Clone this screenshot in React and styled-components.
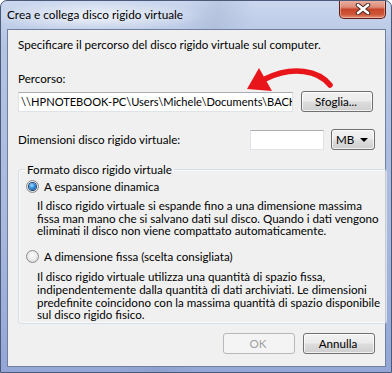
import React from 'react';
import styled, { createGlobalStyle } from 'styled-components';

const GlobalStyle = createGlobalStyle`
  html, body {
    margin: 0;
    padding: 0;
    background: #ffffff;
  }
  body {
    width: 392px;
    height: 373px;
    overflow: hidden;
    font-family: Lato, "Liberation Sans", sans-serif;
    font-size: 11.6px;
    color: #000;
  }
`;

const Window = styled.div`
  position: relative;
  box-sizing: border-box;
  width: 392px;
  height: 373px;
  border: 1px solid #4a5a78;
  border-radius: 7px 7px 0 0;
  background:
    radial-gradient(ellipse 110px 16px at 95px 15px, rgba(255, 255, 255, 0.75), rgba(255, 255, 255, 0) 100%),
    linear-gradient(100deg, rgba(255, 255, 255, 0) 40%, rgba(120, 135, 170, 0.18) 48%, rgba(255, 255, 255, 0) 56%),
    linear-gradient(180deg, #cad7ee 0%, #b4c4e3 12%, #a9b9de 60%, #93a6d6 100%);
  display: flex;
  flex-direction: column;
  overflow: hidden;
`;

const TitleBar = styled.div`
  display: flex;
  align-items: flex-start;
  justify-content: space-between;
  height: 28px;
  padding-left: 6px;
`;

const Title = styled.div`
  font-size: 11.8px;
  line-height: 28px;
  color: #000;
`;

const CloseButton = styled.div`
  box-sizing: border-box;
  width: 47px;
  height: 19px;
  margin-top: -1px;
  margin-right: 5px;
  border: 1px solid #5c1f16;
  border-top: none;
  border-radius: 0 0 5px 5px;
  background: linear-gradient(180deg, #eab3a6 0%, #dc8a77 40%, #c8442a 52%, #cf5638 80%, #e49078 100%);
  box-shadow: inset 0 0 0 1px rgba(255, 220, 210, 0.45);
  display: flex;
  align-items: center;
  justify-content: center;
`;

const Client = styled.div`
  box-sizing: border-box;
  margin: 0 5px 0 6px;
  height: 338px;
  border: 1px solid #6f7f9e;
  background: #f0f0f0;
  padding: 7px 10px 0 10px;
  display: flex;
  flex-direction: column;
`;

const Text = styled.div`
  line-height: 15px;
  margin-top: ${(p) => p.top || 0}px;
  white-space: nowrap;
`;

const Row = styled.div`
  display: flex;
  align-items: center;
  height: 21px;
  margin-top: ${(p) => p.top || 0}px;
`;

const TextBox = styled.div`
  box-sizing: border-box;
  width: ${(p) => p.w}px;
  height: 20px;
  background: #fff;
  border: 1px solid #dfe3e8;
  border-top-color: #abadb3;
  padding: 0 2px;
  font-size: 11.1px;
  line-height: 18px;
  overflow: hidden;
  white-space: nowrap;
  margin-left: ${(p) => p.left || 0}px;
`;

const Button = styled.div`
  box-sizing: border-box;
  width: ${(p) => p.w || 72}px;
  height: 21px;
  margin-left: ${(p) => p.left || 0}px;
  border: 1px solid ${(p) => (p.disabled ? '#b5b9bd' : '#707070')};
  border-radius: 3px;
  background: ${(p) =>
    p.disabled
      ? '#f4f4f4'
      : 'linear-gradient(180deg, #f2f2f2 0%, #ebebeb 48%, #dddddd 52%, #cfcfcf 100%)'};
  box-shadow: inset 0 0 0 1px ${(p) => (p.disabled ? '#f4f4f4' : 'rgba(255,255,255,0.7)')};
  color: ${(p) => (p.disabled ? '#a0a0a0' : '#000')};
  display: flex;
  align-items: center;
  justify-content: ${(p) => p.justify || 'center'};
  padding: 0 6px 0 4px;
`;

const Spacer = styled.div`
  flex: 1;
`;

const Arrow = styled.svg`
  position: absolute;
  left: 0;
  top: 0;
  pointer-events: none;
`;

const Group = styled.fieldset`
  box-sizing: border-box;
  margin: 12px 0 0 0;
  padding: 0 6px 1px 6px;
  border: 1px solid #d5dfe5;
  border-radius: 3px;
  box-shadow: inset 0 0 0 1px rgba(255, 255, 255, 0.6);
`;

const Legend = styled.legend`
  padding: 0 2px;
  line-height: 15px;
`;

const Option = styled.div`
  display: flex;
  align-items: center;
  line-height: 15px;
  margin-top: ${(p) => p.top || 0}px;
  gap: 5px;
`;

const Radio = styled.div`
  box-sizing: border-box;
  width: 13px;
  height: 13px;
  margin-left: 1px;
  border-radius: 50%;
  border: 1px solid #8a8c8e;
  background: radial-gradient(circle at 50% 40%, #ffffff 0%, #e8e8e8 55%, #cfcfcf 100%);
  display: flex;
  align-items: center;
  justify-content: center;
`;

const Dot = styled.div`
  width: 7px;
  height: 7px;
  border-radius: 50%;
  background: radial-gradient(circle at 40% 35%, #a8dcff 0%, #2f8fe0 45%, #0b3f7a 100%);
  box-shadow: 0 0 0 1px #1c3f6a;
`;

const Desc = styled.div`
  padding-left: 12px;
  line-height: 12.7px;
  margin-top: ${(p) => p.top || 0}px;
  white-space: nowrap;
`;

const Footer = styled.div`
  display: flex;
  justify-content: flex-end;
  margin-top: 9px;
`;

const DropArrow = styled.span`
  width: 0;
  height: 0;
  border-left: 4px solid transparent;
  border-right: 4px solid transparent;
  border-top: 4px solid #000;
`;

export default function App() {
  return (
    <>
      <GlobalStyle />
      <Window>
        <TitleBar>
          <Title>Crea e collega disco rigido virtuale</Title>
          <CloseButton>
            <svg width="16" height="12" viewBox="0 0 16 12">
              <path d="M3 2 L13 10 M13 2 L3 10" stroke="#4a2a24" strokeWidth="4.5" strokeLinecap="round" />
              <path d="M3 2 L13 10 M13 2 L3 10" stroke="#ffffff" strokeWidth="2.6" strokeLinecap="round" />
            </svg>
          </CloseButton>
        </TitleBar>
        <Client>
          <Text>Specificare il percorso del disco rigido virtuale sul computer.</Text>
          <Text top={19}>Percorso:</Text>
          <Row top={5}>
            <TextBox w={275}>\\HPNOTEBOOK-PC\Users\Michele\Documents\BACKUP</TextBox>
            <Button w={72} left={8}>Sfoglia...</Button>
          </Row>
          <Row top={17}>
            <span>Dimensioni disco rigido virtuale:</span>
            <Spacer />
            <TextBox w={74} />
            <Button w={44} left={7} justify="space-between">
              <span>MB</span>
              <DropArrow />
            </Button>
          </Row>
          <Group>
            <Legend>Formato disco rigido virtuale</Legend>
            <Option top={2}>
              <Radio>
                <Dot />
              </Radio>
              <span>A espansione dinamica</span>
            </Option>
            <Desc top={6}>
              Il disco rigido virtuale si espande fino a una dimensione massima
              <br />
              fissa man mano che si salvano dati sul disco. Quando i dati vengono
              <br />
              eliminati il disco non viene compattato automaticamente.
            </Desc>
            <Option top={11}>
              <Radio />
              <span>A dimensione fissa (scelta consigliata)</span>
            </Option>
            <Desc top={7}>
              Il disco rigido virtuale utilizza una quantità di spazio fissa,
              <br />
              indipendentemente dalla quantità di dati archiviati. Le dimensioni
              <br />
              predefinite coincidono con la massima quantità di spazio disponibile
              <br />
              sul disco rigido fisico.
            </Desc>
          </Group>
          <Footer>
            <Button w={72} disabled>OK</Button>
            <Button w={72} left={8}>Annulla</Button>
          </Footer>
        </Client>
        <Arrow width="392" height="373" viewBox="0 0 392 373">
          <path d="M329 84 C 318 70, 292 64, 264 78" fill="none" stroke="#e8151b" strokeWidth="5.5" strokeLinecap="round" />
          <path d="M246 88 L258 67 L271 90 Z" fill="#e8151b" />
        </Arrow>
      </Window>
    </>
  );
}
